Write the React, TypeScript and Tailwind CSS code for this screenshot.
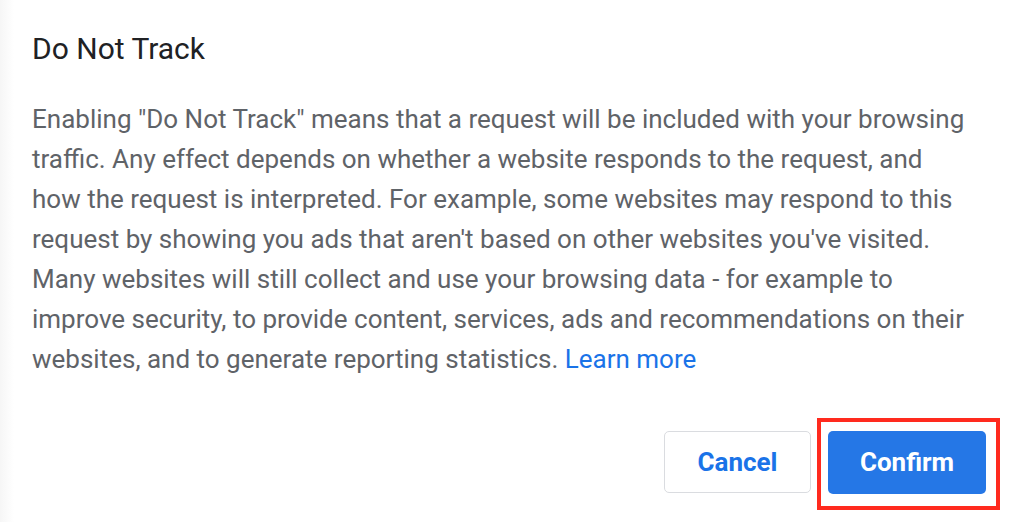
export default function App() {
  return (
    <div
      className="w-[1012px] h-[522px] bg-white bg-[linear-gradient(to_right,#f6f6f6,#ffffff_14px)] text-[#5f6368] overflow-hidden"
      style={{ fontFamily: 'Roboto, "Liberation Sans", sans-serif' }}
    >
      <div className="pl-[32px] pr-[26px] pt-[29px]">
        <h1 className="text-[30px] leading-[40px] text-[#202124] font-normal">Do Not Track</h1>
        <p className="mt-[30px] text-[26px] leading-[40px] whitespace-nowrap">
          Enabling "Do Not Track" means that a request will be included with your browsing
          <br />
          traffic. Any effect depends on whether a website responds to the request, and
          <br />
          how the request is interpreted. For example, some websites may respond to this
          <br />
          request by showing you ads that aren't based on other websites you've visited.
          <br />
          Many websites will still collect and use your browsing data - for example to
          <br />
          improve security, to provide content, services, ads and recommendations on their
          <br />
          websites, and to generate reporting statistics. <a className="text-[#1a73e8]">Learn more</a>
        </p>
        <div className="mt-[52px] flex justify-end gap-[17px]">
          <button className="w-[147px] h-[62px] rounded-[5px] border-[1.5px] border-[#dadce0] bg-white text-[26px] font-bold text-[#1a73e8]">
            Cancel
          </button>
          <div className="relative">
            <button className="w-[158px] h-[63px] rounded-[5px] bg-[#2577e6] text-[26px] font-bold text-white">
              Confirm
            </button>
            <div className="absolute left-[-11px] right-[-14px] top-[-13px] bottom-[-16px] border-[4px] border-[#ff2a1e] pointer-events-none" />
          </div>
        </div>
      </div>
    </div>
  );
}
